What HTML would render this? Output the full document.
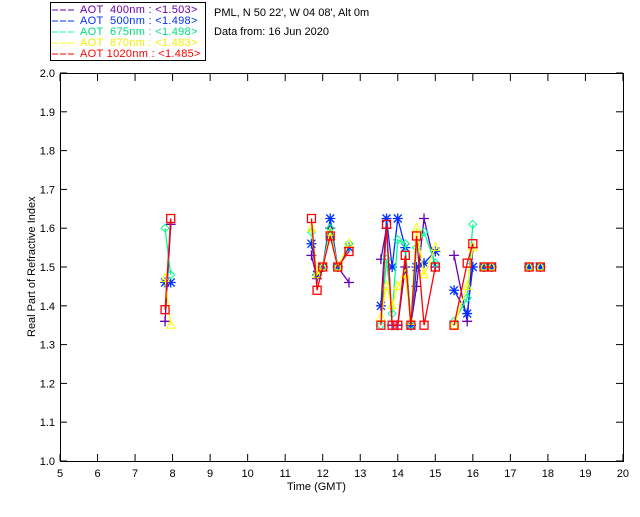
<!DOCTYPE html>
<html><head><style>
body{margin:0;background:#fff;width:640px;height:512px;overflow:hidden;font-family:"Liberation Sans",sans-serif}
svg text{font-family:"Liberation Sans",sans-serif;font-size:11px}
.lg text{letter-spacing:0.3px;white-space:pre}
</style></head><body>
<svg id="s" width="640" height="512" xmlns="http://www.w3.org/2000/svg">
<rect x="50.5" y="2.5" width="155" height="58" fill="none" stroke="#000"/>
<g class="lg" font-size="11">
<line x1="52" y1="10" x2="74" y2="10" stroke="#6a00b0" stroke-dasharray="6,2"/><text x="80" y="13" fill="#6a00b0" xml:space="preserve">AOT  400nm : &lt;1.503&gt;</text>
<line x1="52" y1="21" x2="74" y2="21" stroke="#0030ff" stroke-dasharray="6,2"/><text x="80" y="24" fill="#0030ff" xml:space="preserve">AOT  500nm : &lt;1.498&gt;</text>
<line x1="52" y1="32" x2="74" y2="32" stroke="#00ff90" stroke-dasharray="6,2"/><text x="80" y="35" fill="#00e080" xml:space="preserve">AOT  675nm : &lt;1.498&gt;</text>
<line x1="52" y1="43" x2="74" y2="43" stroke="#ffff00" stroke-dasharray="6,2"/><text x="80" y="46" fill="#f0f000" xml:space="preserve">AOT  870nm : &lt;1.483&gt;</text>
<line x1="52" y1="54" x2="74" y2="54" stroke="#ff0000" stroke-dasharray="6,2"/><text x="80" y="57" fill="#ff0000">AOT 1020nm : &lt;1.485&gt;</text>
</g>
<text x="214" y="16">PML, N 50 22', W 04 08', Alt 0m</text>
<text x="214" y="35">Data from: 16 Jun 2020</text>
<rect x="60.5" y="73.5" width="563" height="388" fill="none" stroke="#000"/>
<g id="ax"></g>
<text x="287" y="490">Time (GMT)</text>
<text transform="translate(35,337) rotate(-90)">Real Part of Refractive Index</text>
<g id="d"></g>
</svg>
<script>
var X=t=>60+(t-5)*37.53, Y=v=>461-(v-1)*388;
var ax='';
for(var h=5;h<=20;h++){var x=X(h);ax+=`<line x1="${x}" y1="461" x2="${x}" y2="454" stroke="#000"/><line x1="${x}" y1="74" x2="${x}" y2="81" stroke="#000"/><text x="${x}" y="477" text-anchor="middle">${h}</text>`;}
for(var i=0;i<=10;i++){var v=1+i/10,y=Y(v);ax+=`<line x1="60" y1="${y}" x2="67" y2="${y}" stroke="#000"/><line x1="623" y1="${y}" x2="616" y2="${y}" stroke="#000"/><text x="55" y="${y+4}" text-anchor="end">${v.toFixed(1)}</text>`;}
document.getElementById('ax').innerHTML=ax;
var T=[[[16.3,1.5],[16.5,1.5]],[[17.5,1.5]],[[17.8,1.5]]];
var S=[
['#6a00b0','+',[[[7.8,1.36],[7.95,1.61]],[[11.7,1.53],[11.85,1.47],[12.0,1.5],[12.2,1.6],[12.4,1.5],[12.7,1.46]],[[13.55,1.52],[13.7,1.6],[13.85,1.35],[14.0,1.35],[14.2,1.5],[14.35,1.35],[14.5,1.45],[14.7,1.625],[15.0,1.5]],[[15.5,1.53],[15.85,1.36],[16.0,1.55]]].concat(T)],
['#0030ff','*',[[[7.8,1.46],[7.95,1.46]],[[11.7,1.56],[11.85,1.48],[12.0,1.5],[12.2,1.625],[12.4,1.5],[12.7,1.55]],[[13.55,1.4],[13.7,1.625],[13.85,1.5],[14.0,1.625],[14.2,1.55],[14.35,1.35],[14.5,1.5],[14.7,1.51],[15.0,1.54]],[[15.5,1.44],[15.85,1.38],[16.0,1.5]]].concat(T)],
['#00ff90','d',[[[7.8,1.6],[7.95,1.48]],[[11.7,1.59],[11.85,1.48],[12.0,1.5],[12.2,1.6],[12.4,1.5],[12.7,1.56]],[[13.55,1.35],[13.7,1.52],[13.85,1.38],[14.0,1.57],[14.2,1.56],[14.35,1.35],[14.5,1.55],[14.7,1.59],[15.0,1.51]],[[15.5,1.36],[15.85,1.42],[16.0,1.61]]].concat(T)],
['#ffff00','t',[[[7.8,1.47],[7.95,1.35]],[[11.7,1.6],[11.85,1.48],[12.0,1.5],[12.2,1.59],[12.4,1.5],[12.7,1.56]],[[13.55,1.37],[13.7,1.45],[13.85,1.4],[14.0,1.45],[14.2,1.48],[14.35,1.36],[14.5,1.6],[14.7,1.48],[15.0,1.55]],[[15.5,1.35],[15.85,1.45],[16.0,1.55]]].concat(T)],
['#ff0000','s',[[[7.8,1.39],[7.95,1.625]],[[11.7,1.625],[11.85,1.44],[12.0,1.5],[12.2,1.58],[12.4,1.5],[12.7,1.54]],[[13.55,1.35],[13.7,1.61],[13.85,1.35],[14.0,1.35],[14.2,1.53],[14.35,1.35],[14.5,1.58],[14.7,1.35],[15.0,1.5]],[[15.5,1.35],[15.85,1.51],[16.0,1.56]]].concat(T)]];
var o='';
S.forEach(function(s){var c=s[0];s[2].forEach(function(seg){
if(seg.length>1)o+=`<polyline fill="none" stroke="${c}" stroke-width="1.3" points="${seg.map(p=>X(p[0])+','+Y(p[1])).join(' ')}"/>`;
seg.forEach(function(p){var x=X(p[0]),y=Y(p[1]);
if(s[1]=='+')o+=`<path d="M${x-5} ${y}h10M${x} ${y-5}v10" stroke="${c}" stroke-width="1.3"/>`;
if(s[1]=='*')o+=`<path d="M${x-5} ${y}h10M${x} ${y-5}v10M${x-4} ${y-4}l8 8M${x-4} ${y+4}l8 -8" stroke="${c}" stroke-width="1.3"/>`;
if(s[1]=='d')o+=`<path d="M${x} ${y-4}l4 4l-4 4l-4 -4z" fill="none" stroke="${c}"/>`;
if(s[1]=='t')o+=`<path d="M${x} ${y-5}l4 8h-8z" fill="none" stroke="${c}"/>`;
if(s[1]=='s')o+=`<rect x="${x-4}" y="${y-4}" width="8" height="8" fill="none" stroke="${c}" stroke-width="1.3"/>`;
});});});
document.getElementById('d').innerHTML=o;
</script>
</body></html>
